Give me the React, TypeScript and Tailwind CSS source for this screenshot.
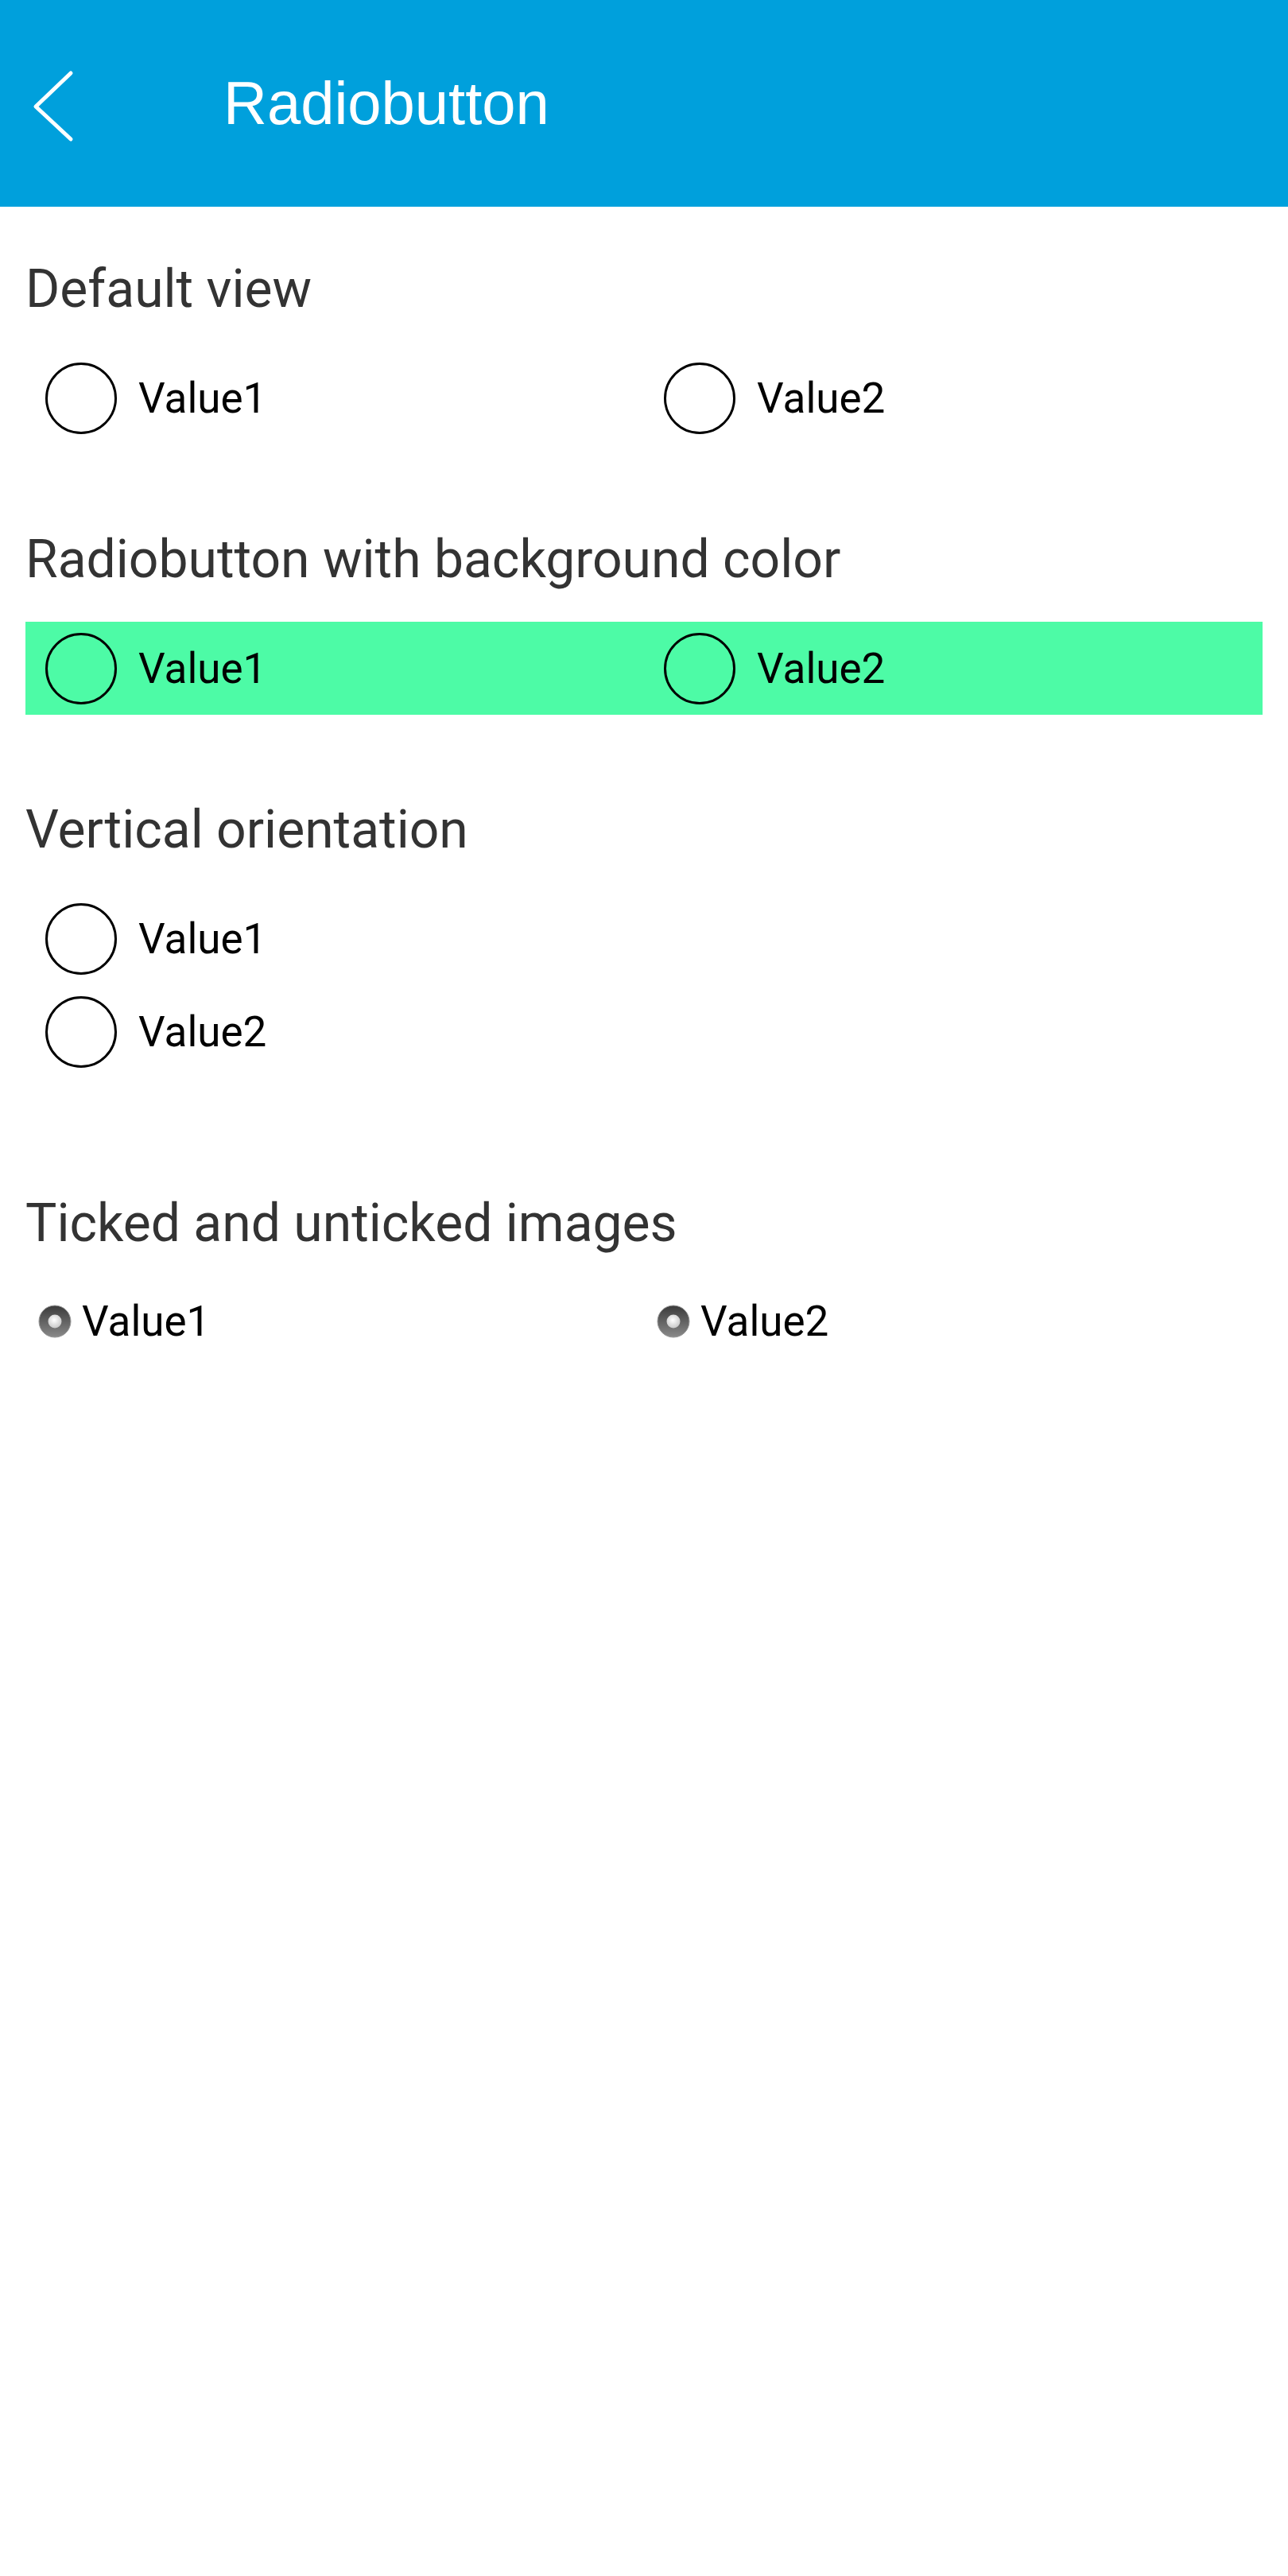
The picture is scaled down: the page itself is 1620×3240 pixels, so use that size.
import { useState } from 'react';

type Option = 'Value1' | 'Value2';

const options: Option[] = ['Value1', 'Value2'];

function Circle() {
  return <span className="block w-[90px] h-[90px] shrink-0 rounded-full border-[3px] border-black" />;
}

function TickIcon() {
  return (
    <svg width="44" height="44" viewBox="0 0 44 44" className="shrink-0">
      <defs>
        <linearGradient id="ring" x1="0" y1="0" x2="0" y2="1">
          <stop offset="0" stopColor="#3a3a3a" />
          <stop offset="1" stopColor="#8a8a8a" />
        </linearGradient>
        <radialGradient id="dot" cx="0.45" cy="0.4" r="0.6">
          <stop offset="0" stopColor="#ffffff" />
          <stop offset="1" stopColor="#c9c9c9" />
        </radialGradient>
      </defs>
      <circle cx="22" cy="22" r="20" fill="url(#ring)" stroke="#9a9a9a" strokeWidth="1" />
      <circle cx="22" cy="22" r="8.5" fill="url(#dot)" />
    </svg>
  );
}

function Heading({ children }: { children: React.ReactNode }) {
  return (
    <h2 className="text-[66px] leading-[76px] text-[#333333] mb-[40px]" style={{ fontFamily: 'Roboto, sans-serif' }}>
      {children}
    </h2>
  );
}

function RadioRow({ label, onClick }: { label: string; onClick: () => void }) {
  return (
    <button onClick={onClick} className="flex items-center h-[117px] pl-[25px] text-left">
      <Circle />
      <span className="ml-[27px] text-[53px] leading-[90px] text-black">{label}</span>
    </button>
  );
}

export default function App() {
  const [picked, setPicked] = useState<Record<string, Option | null>>({});

  const pick = (group: string, value: Option) => setPicked({ ...picked, [group]: value });

  return (
    <div className="w-[1620px] min-h-[3240px] bg-white" style={{ fontFamily: 'Roboto, sans-serif' }}>
      {/* toolbar */}
      <div className="h-[260px] bg-[#00a0dc] flex items-center">
        <svg width="60" height="100" viewBox="0 0 60 100" className="ml-[37px]">
          <path d="M52 12 L8 54 L52 95" fill="none" stroke="white" strokeWidth="5" strokeLinecap="round" strokeLinejoin="round" />
        </svg>
        <h1
          className="ml-[184px] text-[76px] leading-none text-white"
          style={{ fontFamily: '"Liberation Sans", Arial, sans-serif' }}
        >
          Radiobutton
        </h1>
      </div>

      <div className="px-[32px] pt-[66px]">
        <Heading>Default view</Heading>
        <div className="grid grid-cols-2">
          {options.map((o) => (
            <RadioRow key={o} label={o} onClick={() => pick('default', o)} />
          ))}
        </div>

        <div className="mt-[107px]">
          <Heading>Radiobutton with background color</Heading>
          <div className="grid grid-cols-2 bg-[#4dfba6]">
            {options.map((o) => (
              <RadioRow key={o} label={o} onClick={() => pick('color', o)} />
            ))}
          </div>
        </div>

        <div className="mt-[107px]">
          <Heading>Vertical orientation</Heading>
          <div className="flex flex-col">
            {options.map((o) => (
              <RadioRow key={o} label={o} onClick={() => pick('vertical', o)} />
            ))}
          </div>
        </div>

        <div className="mt-[145px]">
          <Heading>Ticked and unticked images</Heading>
          <div className="grid grid-cols-2">
            {options.map((o) => (
              <button key={o} onClick={() => pick('ticked', o)} className="flex items-center h-[90px] pl-[15px] text-left">
                <TickIcon />
                <span className="ml-[12px] text-[53px] leading-[90px] text-black">{o}</span>
              </button>
            ))}
          </div>
        </div>
      </div>
    </div>
  );
}
